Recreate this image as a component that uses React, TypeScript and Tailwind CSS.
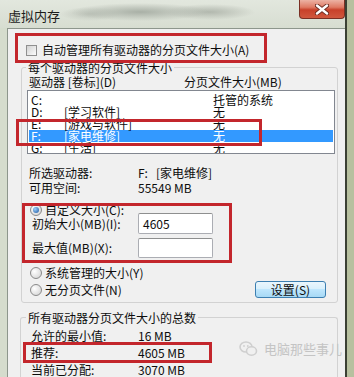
import React from "react";

function Radio({ on }: { on?: boolean }) {
  return (
    <div className="w-[12px] h-[12px] shrink-0 rounded-full border border-[#8a8a8a] bg-[radial-gradient(circle_at_35%_35%,#ffffff,#cfcfcf)] flex items-center justify-center">
      {on ? (
        <div className="w-[6px] h-[6px] rounded-full bg-[radial-gradient(circle_at_35%_35%,#9fd0fa,#1a55a0)]" />
      ) : null}
    </div>
  );
}

const rows: { d: string; l: string; s: string; sel?: boolean }[] = [
  { d: "C:", l: "", s: "托管的系统" },
  { d: "D:", l: "[学习软件]", s: "无" },
  { d: "E:", l: "[游戏与软件]", s: "无" },
  { d: "F:", l: "[家电维修]", s: "无", sel: true },
  { d: "G:", l: "[生活]", s: "无" },
];

export default function App() {
  return (
    <div className="w-[354px] h-[377px] overflow-hidden flex bg-[#b7c09f] font-['Noto_Sans_CJK_SC',sans-serif] text-[#0d0d0d]">
      <div className="w-[345px] h-full flex flex-col rounded-tl-[6px] bg-[#d5dccd]">
        {/* title bar */}
        <div className="h-[28px] shrink-0 flex bg-[radial-gradient(ellipse_70px_9px_at_140px_12px,#a9b0a6,transparent),radial-gradient(ellipse_45px_8px_at_210px_12px,#b2b8ae,transparent),radial-gradient(ellipse_30px_7px_at_90px_14px,#c0c6bc,transparent),linear-gradient(to_bottom,#e2e7de,#d7ddd1)]">
          <div className="pl-[8px] pt-[9px] text-[13px] leading-[14px] text-[#1c1c1c]">虚拟内存</div>
          <div className="ml-auto w-[46px] h-[19px] rounded-b-[4px] border border-t-0 border-[#7a3024] bg-[linear-gradient(to_bottom,#ecb2a4_0%,#df7a64_40%,#c8412a_55%,#d0583e_100%)] flex items-center justify-center">
            <svg width="14" height="11" viewBox="0 0 14 11">
              <path d="M2 1.5 L12 9.5 M12 1.5 L2 9.5" stroke="#6a2a20" strokeWidth="4.2" strokeLinecap="round" />
              <path d="M2 1.5 L12 9.5 M12 1.5 L2 9.5" stroke="#ffffff" strokeWidth="2.4" strokeLinecap="round" />
            </svg>
          </div>
        </div>
        {/* client */}
        <div className="ml-[7px] flex-1 relative bg-[#f0f0f0] border-l border-t border-[#8d968c] text-[12px] leading-[12px]">
          <div className="mt-[15px] ml-[18px] h-[12px] flex items-center gap-[5px]">
            <div className="w-[11px] h-[11px] border border-[#8f8f8f] bg-[linear-gradient(135deg,#d2d2d2,#fbfbfb)]" />
            <span>自动管理所有驱动器的分页文件大小(A)</span>
          </div>

          {/* group 1 */}
          <div className="mt-[11px] ml-[13px] w-[317px] border border-[#d2d2d2] rounded-[3px] pb-[4px]">
            <div className="-mt-[7px] ml-[4px] px-[2px] w-fit h-[13px] leading-[13px] bg-[#f0f0f0]">每个驱动器的分页文件大小</div>
            <div className="mt-[2px] h-[12px] flex pl-[7px]">
              <span className="w-[155px]">驱动器 [卷标](D)</span>
              <span>分页文件大小(MB)</span>
            </div>
            <div className="mt-[2px] ml-[5px] w-[308px] h-[64px] border border-[#828790] bg-white pt-[3px] overflow-hidden">
              {rows.map((r) => (
                <div
                  key={r.d}
                  className={
                    r.sel
                      ? "mx-[1px] h-[12px] flex pl-[2px] bg-[#3399ff] text-white"
                      : "mx-[1px] h-[12px] flex pl-[2px]"
                  }
                >
                  <span className="w-[33px]">{r.d}</span>
                  <span className="w-[149px]">{r.l}</span>
                  <span>{r.s}</span>
                </div>
              ))}
            </div>
            <div className="mt-[13px] h-[12px] flex pl-[7px]">
              <span className="w-[109px]">所选驱动器:</span>
              <span>F:&nbsp;&nbsp;&nbsp;[家电维修]</span>
            </div>
            <div className="mt-[3px] h-[12px] flex pl-[7px]">
              <span className="w-[109px]">可用空间:</span>
              <span>55549 MB</span>
            </div>
            <div className="mt-[10px] h-[12px] flex items-center pl-[8px] gap-[3px]">
              <Radio on />
              <span>自定义大小(C):</span>
            </div>
            <div className="-mt-[3px] h-[21px] flex items-center pl-[10px]">
              <span className="w-[106px]">初始大小(MB)(I):</span>
              <div className="w-[75px] h-[21px] rounded-[2px] border border-[#abadb3] border-t-[#8e8f8f] bg-white flex items-center pl-[4px]">4605</div>
            </div>
            <div className="mt-[4px] h-[20px] flex items-center pl-[10px]">
              <span className="w-[106px]">最大值(MB)(X):</span>
              <div className="w-[75px] h-[20px] rounded-[2px] border border-[#abadb3] border-t-[#8e8f8f] bg-white" />
            </div>
            <div className="mt-[9px] h-[12px] flex items-center pl-[8px] gap-[3px]">
              <Radio />
              <span>系统管理的大小(Y)</span>
            </div>
            <div className="mt-[2px] h-[17px] flex items-center pl-[8px] gap-[3px]">
              <Radio />
              <span>无分页文件(N)</span>
              <div className="ml-auto mr-[11px] w-[71px] h-[17px] rounded-[3px] border border-[#3c7fb1] bg-[linear-gradient(to_bottom,#eaf6fd_0%,#d9f0fc_45%,#bee6fd_50%,#a7d9f5_100%)] flex items-center justify-center">
                设置(S)
              </div>
            </div>
          </div>

          {/* group 2 */}
          <div className="mt-[14px] ml-[12px] w-[318px] h-[80px] border-t border-l border-r border-[#d2d2d2] rounded-t-[3px]">
            <div className="-mt-[7px] ml-[5px] px-[2px] w-fit h-[13px] leading-[13px] bg-[#f0f0f0]">所有驱动器分页文件大小的总数</div>
            <div className="mt-[6px] h-[12px] flex pl-[10px]">
              <span className="w-[107px]">允许的最小值:</span>
              <span>16 MB</span>
            </div>
            <div className="mt-[5px] h-[12px] flex pl-[10px]">
              <span className="w-[107px]">推荐:</span>
              <span>4605 MB</span>
            </div>
            <div className="mt-[5px] h-[12px] flex pl-[10px]">
              <span className="w-[107px]">当前已分配:</span>
              <span>3070 MB</span>
            </div>
          </div>

          {/* red annotation boxes */}
          <div className="absolute left-[7px] top-[4px] w-[252px] h-[30px] border-[3px] border-[#c3262c]" />
          <div className="absolute left-[8px] top-[90px] w-[246px] h-[27px] border-[3px] border-[#c3262c]" />
          <div className="absolute left-[14px] top-[174px] w-[210px] h-[60px] border-[3px] border-[#c3262c]" />
          <div className="absolute left-[15px] top-[313px] w-[189px] h-[21px] border-[3px] border-[#c3262c]" />

          {/* watermark */}
          <div className="absolute left-[231px] top-[312px] flex items-center gap-[6px] text-[#c4c4c4] text-[13px] leading-[14px]">
            <svg width="19" height="16" viewBox="0 0 19 16">
              <ellipse cx="7" cy="6" rx="6" ry="5" fill="none" stroke="#cfcfcf" strokeWidth="1.6" />
              <ellipse cx="12.5" cy="10" rx="5" ry="4.2" fill="#f0f0f0" stroke="#cfcfcf" strokeWidth="1.6" />
              <circle cx="5" cy="5" r="0.9" fill="#cfcfcf" />
              <circle cx="8.8" cy="5" r="0.9" fill="#cfcfcf" />
            </svg>
            <span>电脑那些事儿</span>
          </div>
        </div>
      </div>
      <div className="w-[2px] h-full bg-[#3b4034]" />
    </div>
  );
}
